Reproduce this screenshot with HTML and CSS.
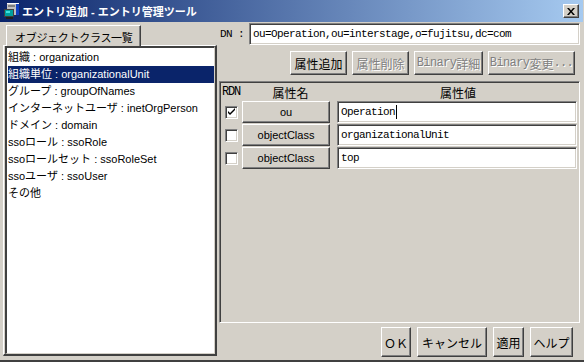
FILE: index.html
```html
<!DOCTYPE html>
<html lang="ja">
<head>
  <meta charset="UTF-8">
  <title>エントリ追加 - エントリ管理ツール</title>
  <link rel="stylesheet" href="styles.css">
</head>
<body>
  <div class="window">
    <div class="titlebar">
      <svg class="app-icon" width="16" height="16" viewBox="0 0 16 16">
        <rect x="3" y="0" width="12" height="12" fill="#c0c0c0"/>
        <rect x="3" y="0" width="12" height="1" fill="#fff"/>
        <rect x="12" y="1" width="3" height="11" fill="#1040c0"/>
        <rect x="4" y="2" width="7" height="2" fill="#808080"/>
        <rect x="0" y="6" width="10" height="8" fill="#404040"/>
        <rect x="1" y="7" width="8" height="6" fill="#00a0a0"/>
        <rect x="2" y="8" width="4" height="2" fill="#40e0e0"/>
        <rect x="2" y="14" width="7" height="2" fill="#202020"/>
      </svg>
      <span class="title">エントリ追加 - エントリ管理ツール</span>
      <div class="close">
        <svg width="8" height="7" viewBox="0 0 8 7">
          <path d="M0 0h2l2 2.5L6 0h2L5 3.5 8 7H6L4 4.5 2 7H0l3-3.5z" fill="#000"/>
        </svg>
      </div>
    </div>

    <div class="main">
      <div class="left">
        <div class="tab">オブジェクトクラス一覧</div>
        <div class="tabpage">
          <ul class="list">
            <li>組織 : organization</li>
            <li class="selected">組織単位 : organizationalUnit</li>
            <li>グループ : groupOfNames</li>
            <li>インターネットユーザ : inetOrgPerson</li>
            <li>ドメイン : domain</li>
            <li>ssoロール : ssoRole</li>
            <li>ssoロールセット : ssoRoleSet</li>
            <li>ssoユーザ : ssoUser</li>
            <li>その他</li>
          </ul>
        </div>
      </div>

      <div class="right">
        <div class="dn-row">
          <span class="dn-label mono">DN :</span>
          <div class="field dn-field mono">ou=Operation,ou=interstage,o=fujitsu,dc=com</div>
        </div>

        <div class="attr-buttons">
          <div class="btn btn-add">属性追加</div>
          <div class="btn btn-del disabled">属性削除</div>
          <div class="btn btn-bin disabled"><span class="mono">Binary</span>詳細</div>
          <div class="btn btn-binedit disabled"><span class="mono">Binary</span>変更<span class="mono">...</span></div>
        </div>

        <div class="attr-table">
          <div class="thead">
            <span class="th-rdn mono">RDN</span>
            <span class="th-name">属性名</span>
            <span class="th-value">属性値</span>
          </div>
          <div class="row">
            <div class="check checked">
              <svg width="9" height="9" viewBox="0 0 9 9"><path d="M1 3l2 2 5-5v2L3 7 1 5z" fill="#000"/></svg>
            </div>
            <div class="btn name-btn">ou</div>
            <div class="field value-field mono">Operation<span class="caret"></span></div>
          </div>
          <div class="row">
            <div class="check"></div>
            <div class="btn name-btn">objectClass</div>
            <div class="field value-field mono">organizationalUnit</div>
          </div>
          <div class="row">
            <div class="check"></div>
            <div class="btn name-btn">objectClass</div>
            <div class="field value-field mono">top</div>
          </div>
        </div>

        <div class="footer">
          <div class="btn btn-ok">ＯＫ</div>
          <div class="btn btn-cancel">キャンセル</div>
          <div class="btn btn-apply">適用</div>
          <div class="btn btn-help">ヘルプ</div>
        </div>
      </div>
    </div>
  </div>
</body>
</html>
```

FILE: styles.css
```css
* {
  box-sizing: border-box;
}
body {
  margin: 0;
  width: 584px;
  height: 362px;
  overflow: hidden;
  background: #d4d0c8;
  font-family: "Liberation Sans", "Noto Sans CJK JP", sans-serif;
  font-size: 11px;
  color: #000;
}
.mono {
  font-family: "Liberation Mono", "Noto Sans CJK JP", monospace;
  letter-spacing: -0.6px;
}
.window {
  height: 362px;
  display: flex;
  flex-direction: column;
  border-bottom: 2px solid #404040;
}

/* title bar */
.titlebar {
  height: 22px;
  margin-right: 1px;
  display: flex;
  align-items: center;
  padding-left: 4px;
  background: linear-gradient(to right, #0a246a, #a6caf0);
}
.app-icon {
  flex: none;
}
.title {
  margin-left: 2px;
  color: #fff;
  font-weight: bold;
  font-size: 11px;
  flex: 1;
}
.close {
  width: 16px;
  height: 14px;
  margin-right: 4px;
  display: flex;
  align-items: center;
  justify-content: center;
  background: #d4d0c8;
  border-top: 1px solid #fff;
  border-left: 1px solid #fff;
  border-right: 1px solid #404040;
  border-bottom: 1px solid #404040;
  box-shadow: inset -1px -1px #808080;
}

.main {
  flex: 1;
  display: flex;
}

/* left column */
.left {
  width: 219px;
  display: flex;
  flex-direction: column;
  padding: 3px 0 4px 3px;
}
.tab {
  width: 135px;
  height: 21px;
  margin-left: 3px;
  padding: 3px 0 0 8px;
  font-size: 11px;
  letter-spacing: -0.3px;
  border-top: 1px solid #fff;
  border-left: 1px solid #fff;
  border-right: 1px solid #404040;
  box-shadow: inset -1px 0 #808080;
  position: relative;
  z-index: 1;
  margin-bottom: -1px;
  background: #d4d0c8;
}
.tabpage {
  width: 214px;
  flex: 1;
  display: flex;
  padding: 0 0 0 1px;
  border-top: 1px solid #fff;
  border-left: 1px solid #fff;
  border-right: 2px solid #404040;
  border-bottom: 2px solid #404040;
}
.list {
  flex: 1;
  margin: 0;
  padding: 1px 0 0 1px;
  list-style: none;
  background: #fff;
  border-top: 2px solid #404040;
  border-left: 2px solid #404040;
  border-right: 1px solid #d4d0c8;
  border-bottom: 1px solid #d4d0c8;
}
.list li {
  height: 17px;
  line-height: 17px;
  white-space: nowrap;
}
.list li.selected {
  background: #0a246a;
  color: #fff;
}

/* right column */
.right {
  flex: 1;
  display: flex;
  flex-direction: column;
}
.dn-row {
  display: flex;
  align-items: center;
  margin-top: 1px;
  height: 22px;
}
.dn-label {
  width: 30px;
  padding-left: 1px;
  font-size: 11px;
}
.field {
  background: #fff;
  border-top: 1px solid #808080;
  border-left: 1px solid #808080;
  border-right: 1px solid #fff;
  border-bottom: 1px solid #fff;
  box-shadow: inset 1px 1px #404040, inset -1px -1px #d4d0c8;
  font-size: 11px;
  display: flex;
  align-items: center;
  padding-left: 3px;
  white-space: nowrap;
}
.dn-field {
  width: 331px;
  height: 22px;
}

.btn {
  display: flex;
  align-items: center;
  justify-content: center;
  background: #d4d0c8;
  border-top: 1px solid #fff;
  border-left: 1px solid #fff;
  border-right: 1px solid #404040;
  border-bottom: 1px solid #404040;
  box-shadow: inset -1px -1px #808080;
  font-size: 12px;
  white-space: nowrap;
}
.btn.disabled {
  color: #808080;
  text-shadow: 1px 1px #fff;
}
.attr-buttons {
  display: flex;
  justify-content: flex-end;
  gap: 5px;
  margin-top: 6px;
  padding-right: 9px;
  height: 24px;
}
.btn-add { width: 57px; }
.btn-del { width: 57px; }
.btn-bin { width: 69px; }
.btn-binedit { width: 87px; }

/* attribute table */
.attr-table {
  width: 361px;
  height: 242px;
  margin-top: 6px;
  border-top: 1px solid #808080;
  border-left: 1px solid #808080;
  border-right: 1px solid #fff;
  border-bottom: 1px solid #fff;
  box-shadow: inset 1px 1px #404040;
  padding: 1px 0 0 1px;
}
.thead {
  display: flex;
  align-items: center;
  height: 18px;
  font-size: 12px;
}
.th-rdn {
  width: 22px;
  padding-left: 1px;
  font-size: 12px;
  letter-spacing: -1.2px;
}
.th-name {
  width: 95px;
  text-align: center;
}
.th-value {
  width: 240px;
  text-align: center;
}
.row {
  display: flex;
  align-items: center;
  height: 22px;
  margin-bottom: 1px;
}
.check {
  width: 13px;
  height: 13px;
  margin: 0 4px;
  background: #fff;
  border-top: 1px solid #808080;
  border-left: 1px solid #808080;
  border-right: 1px solid #fff;
  border-bottom: 1px solid #fff;
  box-shadow: inset 1px 1px #404040, inset -1px -1px #d4d0c8;
  display: flex;
  align-items: center;
  justify-content: center;
}
.name-btn {
  width: 88px;
  height: 22px;
  font-size: 11px;
}
.value-field {
  width: 240px;
  height: 22px;
  margin-left: 7px;
}
.caret {
  display: inline-block;
  width: 1px;
  height: 14px;
  background: #000;
  margin-left: 1px;
}

/* footer */
.footer {
  flex: 1;
  display: flex;
  justify-content: flex-end;
  gap: 6px;
  padding: 4px 11px 0 0;
}
.footer .btn {
  height: 30px;
}
.btn-ok { width: 30px; }
.btn-cancel { width: 70px; }
.btn-apply { width: 31px; }
.btn-help { width: 43px; }
```
